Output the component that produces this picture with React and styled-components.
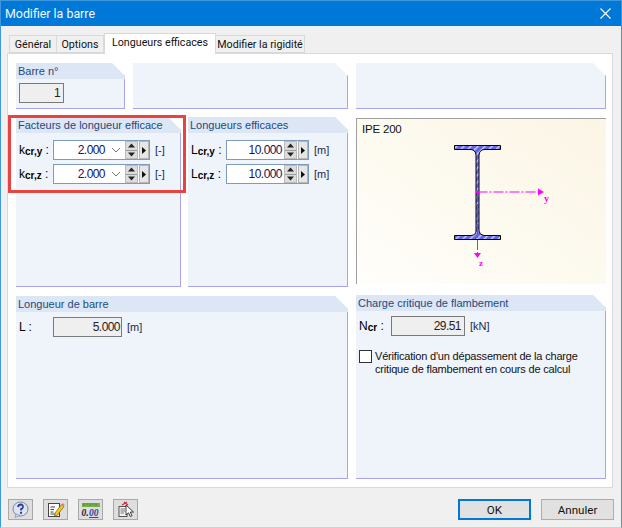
import React from "react";
import styled, { createGlobalStyle } from "styled-components";

const Global = createGlobalStyle`
  html, body { margin: 0; padding: 0; background: #f0f0f0; }
  #root { width: 622px; height: 528px; }
  * { box-sizing: border-box; }
`;

const Win = styled.div`
  width: 622px; height: 528px; display: flex; flex-direction: column;
  background: #f0f0f0; border: 1px solid #3f97dc; border-bottom-color: #d0d0d0;
  font-family: "Liberation Sans", Arial, sans-serif; font-size: 12px; color: #111;
`;
const TitleBar = styled.div`
  height: 25px; flex: none; background: #0078d7; color: #f2f8fd; display: flex; align-items: center;
  justify-content: space-between; padding: 0 10px 0 4px; font-family: Roboto, sans-serif; font-size: 12.4px;
`;
const TabRow = styled.div`
  height: 27px; flex: none; display: flex; align-items: flex-end; padding-left: 8px; position: relative; z-index: 1;
`;
const Tab = styled.div`
  width: ${p => p.$w}px; height: ${p => p.$active ? 21 : 18}px; margin-bottom: ${p => p.$active ? -1 : 0}px;
  padding-top: 1px;
  background: ${p => p.$active ? "#fff" : "#f0f0f0"}; border: 1px solid #d9d9d9;
  border-bottom: ${p => p.$active ? "none" : "1px solid #d9d9d9"}; border-left: ${p => p.$first || p.$active ? "1px solid #d9d9d9" : "none"};
  text-align: center; font-family: Roboto, sans-serif; font-size: 10.7px; line-height: 15px; white-space: nowrap; color: #111;
`;
const Panel = styled.div`
  position: relative; margin: 0 8px 0 6px; height: 435px; flex: none; background: #fff; border: 1px solid #d9d9d9;
  padding: 9px 6px 8px 8px; display: flex; gap: 8px;
`;
const Col = styled.div`
  width: ${p => p.$w}px; flex: none; display: flex; flex-direction: column;
`;
const Row = styled.div`
  display: flex; gap: ${p => p.$gap}px; height: ${p => p.$h}px; margin-bottom: ${p => p.$mb}px; flex: none;
`;
const Group = styled.div`
  width: ${p => p.$w ? p.$w + "px" : "auto"}; flex: ${p => p.$w && !p.$grow ? "none" : "1"}; display: flex; flex-direction: column;
  background: #eff3fa; border-right: 1px solid #a9a5ec; border-bottom: 1px solid #a9a5ec;
  clip-path: polygon(0 0, calc(100% - 13px) 0, 100% 13px, 100% 100%, 0 100%);
`;
const GroupTitle = styled.div`
  height: 16px; flex: none; background: #dde6f4; color: #1c4a7c; font-size: 11px;
  line-height: 16px; padding-left: 2px; white-space: nowrap; margin-right: -1px;
`;
const GroupBody = styled.div`
  display: flex; flex-direction: column; gap: ${p => p.$gap || 0}px; padding: ${p => p.$pad || "7px 0 0 3px"};
`;
const Field = styled.div`
  display: flex; align-items: center; height: 20px;
`;
const Label = styled.div`
  width: ${p => p.$w}px; flex: none; font-size: 12px; color: #000; white-space: nowrap;
  sub { font-size: 10px; vertical-align: baseline; position: relative; top: 1px; font-weight: 700; }
`;
const Box = styled.div`
  width: ${p => p.$w}px; height: 20px; flex: none; display: flex; align-items: center;
  border: 1px solid ${p => p.$ro ? "#7a7a7a" : "#7d9cbb"}; background: ${p => p.$ro ? "#efefef" : "#fff"};
  font-size: 12px; letter-spacing: -.55px;
`;
const Value = styled.div`
  flex: 1; text-align: right; padding-right: ${p => p.$pr}px; line-height: 18px; color: ${p => p.$ro ? "#222" : "#14145a"};
`;
const Unit = styled.div`
  margin-left: ${p => p.$ml}px; color: #1a2a50; font-size: 11px; white-space: nowrap;
`;
const Chevron = styled.svg`
  width: 10px; height: 6px; flex: none; margin-right: 4px;
`;
const SpinStack = styled.div`
  width: 13px; height: 18px; flex: none; display: flex; flex-direction: column; background: #dcdcdc; border: 1px solid #bcbcbc;
`;
const SpinHalf = styled.div`
  flex: 1; display: flex; align-items: center; justify-content: center;
  & + & { border-top: 1px solid #9a9a9a; }
`;
const SpinNext = styled.div`
  width: 10px; height: 18px; flex: none; margin: 0 0 0 1px; background: #e6e6e6; border: 1px solid #b5b5b5; display: flex; align-items: center; justify-content: center;
`;
const Drawing = styled.div`
  height: 166px; margin-bottom: 11px; flex: none; display: grid; border-top: 1px solid #a0a0a0; border-left: 1px solid #a0a0a0;
  background: linear-gradient(215deg, #fbf5e5 0%, #fdfaf0 55%, #fffefb 100%);
  & > * { grid-area: 1 / 1; }
`;
const DrawLabel = styled.div`
  padding: 4px 0 0 5px; font-size: 11.5px; letter-spacing: -.2px; color: #111;
`;
const CheckRow = styled.div`
  display: flex; gap: 3px; margin-top: 14px; padding-left: 3px;
`;
const CheckBox = styled.div`
  width: 13px; height: 13px; flex: none; border: 1px solid #333; background: #fff;
`;
const CheckText = styled.div`
  font-size: 11px; letter-spacing: -.19px; line-height: 13px; color: #111;
`;
const Highlight = styled.div`
  position: absolute; left: 0; top: 61px; width: 178px; height: 78px; border: 3px solid #e8433f; pointer-events: none;
`;
const Footer = styled.div`
  flex: 1; display: flex; align-items: flex-start; padding: 11px 7px 0 7px;
`;
const IconBtn = styled.div`
  width: 25px; height: 21px; margin-right: 10px; flex: none; background: #dedede; border: 1px solid #a8a8a8;
  display: flex; align-items: center; justify-content: center;
`;
const Spacer = styled.div`flex: 1;`;
const Btn = styled.div`
  width: 73px; height: 21px; margin-left: 10px; flex: none; display: flex; align-items: center; justify-content: center;
  background: #e1e1e1; border: ${p => p.$def ? "2px solid #0078d7" : "1px solid #adadad"};
  font-family: Roboto, sans-serif; font-size: 11.6px; color: #111;
`;

const Up = () => <svg width="7" height="5" viewBox="0 0 7 5"><path d="M3.5 0.5 L7 4.5 H0z" fill="#222" /></svg>;
const Down = () => <svg width="7" height="5" viewBox="0 0 7 5"><path d="M0 .5 H7 L3.5 4.5z" fill="#222" /></svg>;
const Next = () => <svg width="4" height="7" viewBox="0 0 4 7"><path d="M0 0 L4 3.5 L0 7z" fill="#111" /></svg>;

const Spin = () => (
  <>
    <SpinStack>
      <SpinHalf><Up /></SpinHalf>
      <SpinHalf><Down /></SpinHalf>
    </SpinStack>
    <SpinNext><Next /></SpinNext>
  </>
);

const Kl = ({ base, sub }) => <>{base}<sub>{sub}</sub> :</>;

const Factor = ({ sub }) => (
  <Field>
    <Label $w={34}><Kl base="k" sub={sub} /></Label>
    <Box $w={97}>
      <Value $pr={6}>2.000</Value>
      <Chevron viewBox="0 0 10 6"><path d="M1 1 L5 5 L9 1" fill="none" stroke="#777" strokeWidth="1" /></Chevron>
      <Spin />
    </Box>
    <Unit $ml={5}>[-]</Unit>
  </Field>
);

const Length = ({ sub }) => (
  <Field>
    <Label $w={35}><Kl base="L" sub={sub} /></Label>
    <Box $w={83}>
      <Value $pr={2}>10.000</Value>
      <Spin />
    </Box>
    <Unit $ml={5}>[m]</Unit>
  </Field>
);

const Section = () => (
  <svg width="249" height="165" viewBox="356 119 249 165">
    <defs>
      <pattern id="hatch" width="5" height="5" patternUnits="userSpaceOnUse" patternTransform="rotate(45)">
        <rect width="5" height="5" fill="#6464ea" />
        <rect width="1.4" height="5" fill="#cfcff8" />
      </pattern>
    </defs>
    <path
      d="M453.5 145.5 H499.5 V149.5 H483 Q478.5 150 478 155 V231 Q478.5 235 483 235.5 H499.5 V239.5 H453.5 V235.5 H470 Q475 235 475 231 V155 Q474.5 150 470 149.5 H453.5 Z"
      fill="url(#hatch)" stroke="#000" strokeWidth="1"
    />
    <path d="M476.5 192 H541" stroke="#f0f" strokeWidth="1" strokeDasharray="10 2 2 2" fill="none" />
    <path d="M476.5 192 V254" stroke="#f0f" strokeWidth="1" strokeDasharray="10 2 2 2" fill="none" />
    <path d="M537 188.5 L543 192 L537 195.5z" fill="#f0f" />
    <path d="M473 253 H480 L476.5 258z" fill="#f0f" />
    <circle cx="476.5" cy="192" r="1.6" fill="#f0f" />
    <text x="543" y="202" fontSize="10" fontWeight="700" fill="#f0f" fontFamily="Liberation Serif, serif">y</text>
    <text x="478" y="266" fontSize="9" fontWeight="700" fill="#f0f" fontFamily="Liberation Serif, serif">z</text>
  </svg>
);

export default function App() {
  return (
    <Win>
      <Global />
      <TitleBar>
        <span>Modifier la barre</span>
        <svg width="11" height="11" viewBox="0 0 11 11"><path d="M.5 .5 L10.5 10.5 M10.5 .5 L.5 10.5" stroke="#fff" strokeWidth="1.1" /></svg>
      </TitleBar>
      <TabRow>
        <Tab $w={48} $first>Général</Tab>
        <Tab $w={47}>Options</Tab>
        <Tab $w={112} $active>Longueurs efficaces</Tab>
        <Tab $w={89}>Modifier la rigidité</Tab>
      </TabRow>
      <Panel>
        <Col $w={332}>
          <Row $gap={8} $h={46} $mb={8}>
            <Group $w={109}>
              <GroupTitle>Barre n°</GroupTitle>
              <GroupBody $pad="4px 0 0 3px">
                <Box $w={45} $ro><Value $pr={3} $ro>1</Value></Box>
              </GroupBody>
            </Group>
            <Group />
          </Row>
          <Row $gap={7} $h={170} $mb={9}>
            <Group $w={165}>
              <GroupTitle>Facteurs de longueur efficace</GroupTitle>
              <GroupBody $gap={4}>
                <Factor sub="cr,y" />
                <Factor sub="cr,z" />
              </GroupBody>
            </Group>
            <Group>
              <GroupTitle>Longueurs efficaces</GroupTitle>
              <GroupBody $gap={4}>
                <Length sub="cr,y" />
                <Length sub="cr,z" />
              </GroupBody>
            </Group>
          </Row>
          <Group $w={332} $grow>
            <GroupTitle>Longueur de barre</GroupTitle>
            <GroupBody $pad="5px 0 0 3px">
              <Field>
                <Label $w={34}>L :</Label>
                <Box $w={69} $ro><Value $pr={1} $ro>5.000</Value></Box>
                <Unit $ml={5}>[m]</Unit>
              </Field>
            </GroupBody>
          </Group>
        </Col>
        <Col $w={250}>
          <Row $gap={0} $h={46} $mb={9}>
            <Group />
          </Row>
          <Drawing>
            <DrawLabel>IPE 200</DrawLabel>
            <Section />
          </Drawing>
          <Group $w={250} $grow>
            <GroupTitle>Charge critique de flambement</GroupTitle>
            <GroupBody $pad="5px 0 0 3px">
              <Field>
                <Label $w={32}><Kl base="N" sub="cr" /></Label>
                <Box $w={74} $ro><Value $pr={3} $ro>29.51</Value></Box>
                <Unit $ml={5}>[kN]</Unit>
              </Field>
            </GroupBody>
            <CheckRow>
              <CheckBox />
              <CheckText>Vérification d'un dépassement de la charge<br />critique de flambement en cours de calcul</CheckText>
            </CheckRow>
          </Group>
        </Col>
        <Highlight />
      </Panel>
      <Footer>
        <IconBtn>
          <svg width="17" height="17" viewBox="0 0 17 17">
            <ellipse cx="8.5" cy="8" rx="7.5" ry="7" fill="#dfe3ee" stroke="#7a86a8" />
            <path d="M4 13 L3 16.5 L8 14.5z" fill="#dfe3ee" stroke="#7a86a8" strokeWidth=".7" />
            <path d="M6 6 Q6.5 3.5 8.8 3.5 Q11.2 3.7 11 6 Q10.8 7.5 9 8.2 V9.5" fill="none" stroke="#2a3f9c" strokeWidth="1.8" />
            <rect x="8" y="10.8" width="2" height="2" fill="#2a3f9c" />
          </svg>
        </IconBtn>
        <IconBtn>
          <svg width="18" height="17" viewBox="0 0 18 17">
            <rect x="1.5" y="2.5" width="11" height="13" fill="#fff" stroke="#444" />
            <path d="M3.5 6 H8 M3.5 8.5 H7 M3.5 11 H6.5 M3.5 13 H9" stroke="#444" strokeWidth="1" />
            <path d="M8 12 L14.5 3.5 L17 5.5 L10.5 14 L7.5 15z" fill="#f3c71f" stroke="#7a5c10" strokeWidth=".7" />
            <path d="M14.5 3.5 L15.5 2 L17.5 3.6 L17 5.5z" fill="#e87a90" />
          </svg>
        </IconBtn>
        <IconBtn>
          <svg width="20" height="16" viewBox="0 0 20 16">
            <rect x="1" y="1" width="18" height="4" fill="#74b04a" />
            <path d="M3 1 V4 M6 1 V3 M9 1 V4 M12 1 V3 M15 1 V4" stroke="#3f7a26" strokeWidth=".7" />
            <text x="0.5" y="14" fontSize="9.5" fontStyle="italic" fontWeight="700" fontFamily="Liberation Serif, serif" fill="#1a1a3c">0.</text>
            <text x="8" y="14" fontSize="9.5" fontStyle="italic" fontWeight="700" fontFamily="Liberation Serif, serif" fill="#2a3f9c" textDecoration="underline">00</text>
          </svg>
        </IconBtn>
        <IconBtn>
          <svg width="18" height="17" viewBox="0 0 18 17">
            <rect x="2" y="5.5" width="8" height="10" fill="#f2f2f2" stroke="#555" />
            <path d="M3.5 8 H8 M3.5 10 H8 M3.5 12 H7" stroke="#555" strokeWidth=".8" />
            <path d="M5 4 L10 1 M7 1 L11 4" stroke="#d8283c" strokeWidth="1.4" />
            <path d="M9 4 L9 14 L11.5 11.8 L13.3 15.5 L15 14.7 L13.3 11 L16.5 11z" fill="#fff" stroke="#111" strokeWidth=".8" />
          </svg>
        </IconBtn>
        <Spacer />
        <Btn $def>OK</Btn>
        <Btn>Annuler</Btn>
      </Footer>
    </Win>
  );
}
